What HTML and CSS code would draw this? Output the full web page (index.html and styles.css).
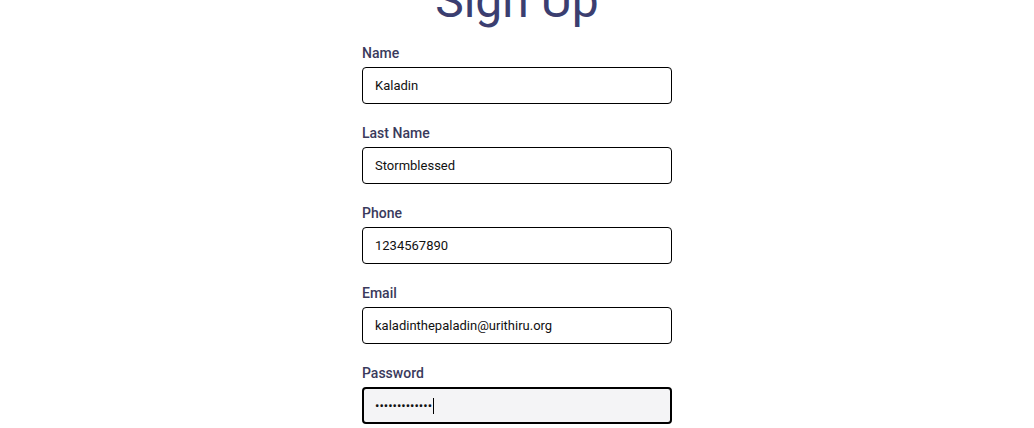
FILE: index.html
```html
<!DOCTYPE html>
<html lang="en">
<head>
<meta charset="utf-8">
<title>Sign Up</title>
<link rel="stylesheet" href="styles.css">
</head>
<body>
<main class="page">
  <form class="signup">
    <h1 class="title">Sign Up</h1>
    <div class="field">
      <label class="label" for="name">Name</label>
      <input class="input" id="name" type="text" value="Kaladin">
    </div>
    <div class="field">
      <label class="label" for="last">Last Name</label>
      <input class="input" id="last" type="text" value="Stormblessed">
    </div>
    <div class="field">
      <label class="label" for="phone">Phone</label>
      <input class="input" id="phone" type="text" value="1234567890">
    </div>
    <div class="field">
      <label class="label" for="email">Email</label>
      <input class="input" id="email" type="text" value="kaladinthepaladin@urithiru.org">
    </div>
    <div class="field">
      <label class="label" for="password">Password</label>
      <div class="input-wrap">
        <input class="input input-focus" id="password" type="password" value="abcdefghijklm">
        <span class="caret"></span>
      </div>
    </div>
  </form>
</main>
</body>
</html>
```
FILE: styles.css
```css
html, body {
  margin: 0;
  padding: 0;
  background: #ffffff;
  font-family: Roboto, "Liberation Sans", sans-serif;
}

.page {
  display: flex;
  justify-content: center;
}

.signup {
  width: 310px;
  margin-top: -27px;
  display: flex;
  flex-direction: column;
  gap: 19px;
}

.title {
  margin: 0 0 -5px;
  font-size: 48px;
  line-height: 56px;
  font-weight: 400;
  color: #3b3e70;
  text-align: center;
}

.field {
  display: flex;
  flex-direction: column;
  gap: 4px;
}

.label {
  font-size: 14px;
  line-height: 20px;
  font-weight: 500;
  color: #3a3a5c;
}

.input {
  box-sizing: border-box;
  display: block;
  width: 310px;
  height: 37px;
  margin: 0;
  padding: 0 12px;
  border: 1px solid #000000;
  border-radius: 4px;
  background: #ffffff;
  font-family: Roboto, "Liberation Sans", sans-serif;
  font-size: 13px;
  color: #111111;
  outline: none;
}

.input-wrap {
  position: relative;
}

.input-focus {
  border: 2px solid #000000;
  padding: 0 11px;
  background: #f4f4f6;
}

.caret {
  position: absolute;
  left: 71px;
  top: 11px;
  width: 1px;
  height: 16px;
  background: #000000;
}
```
